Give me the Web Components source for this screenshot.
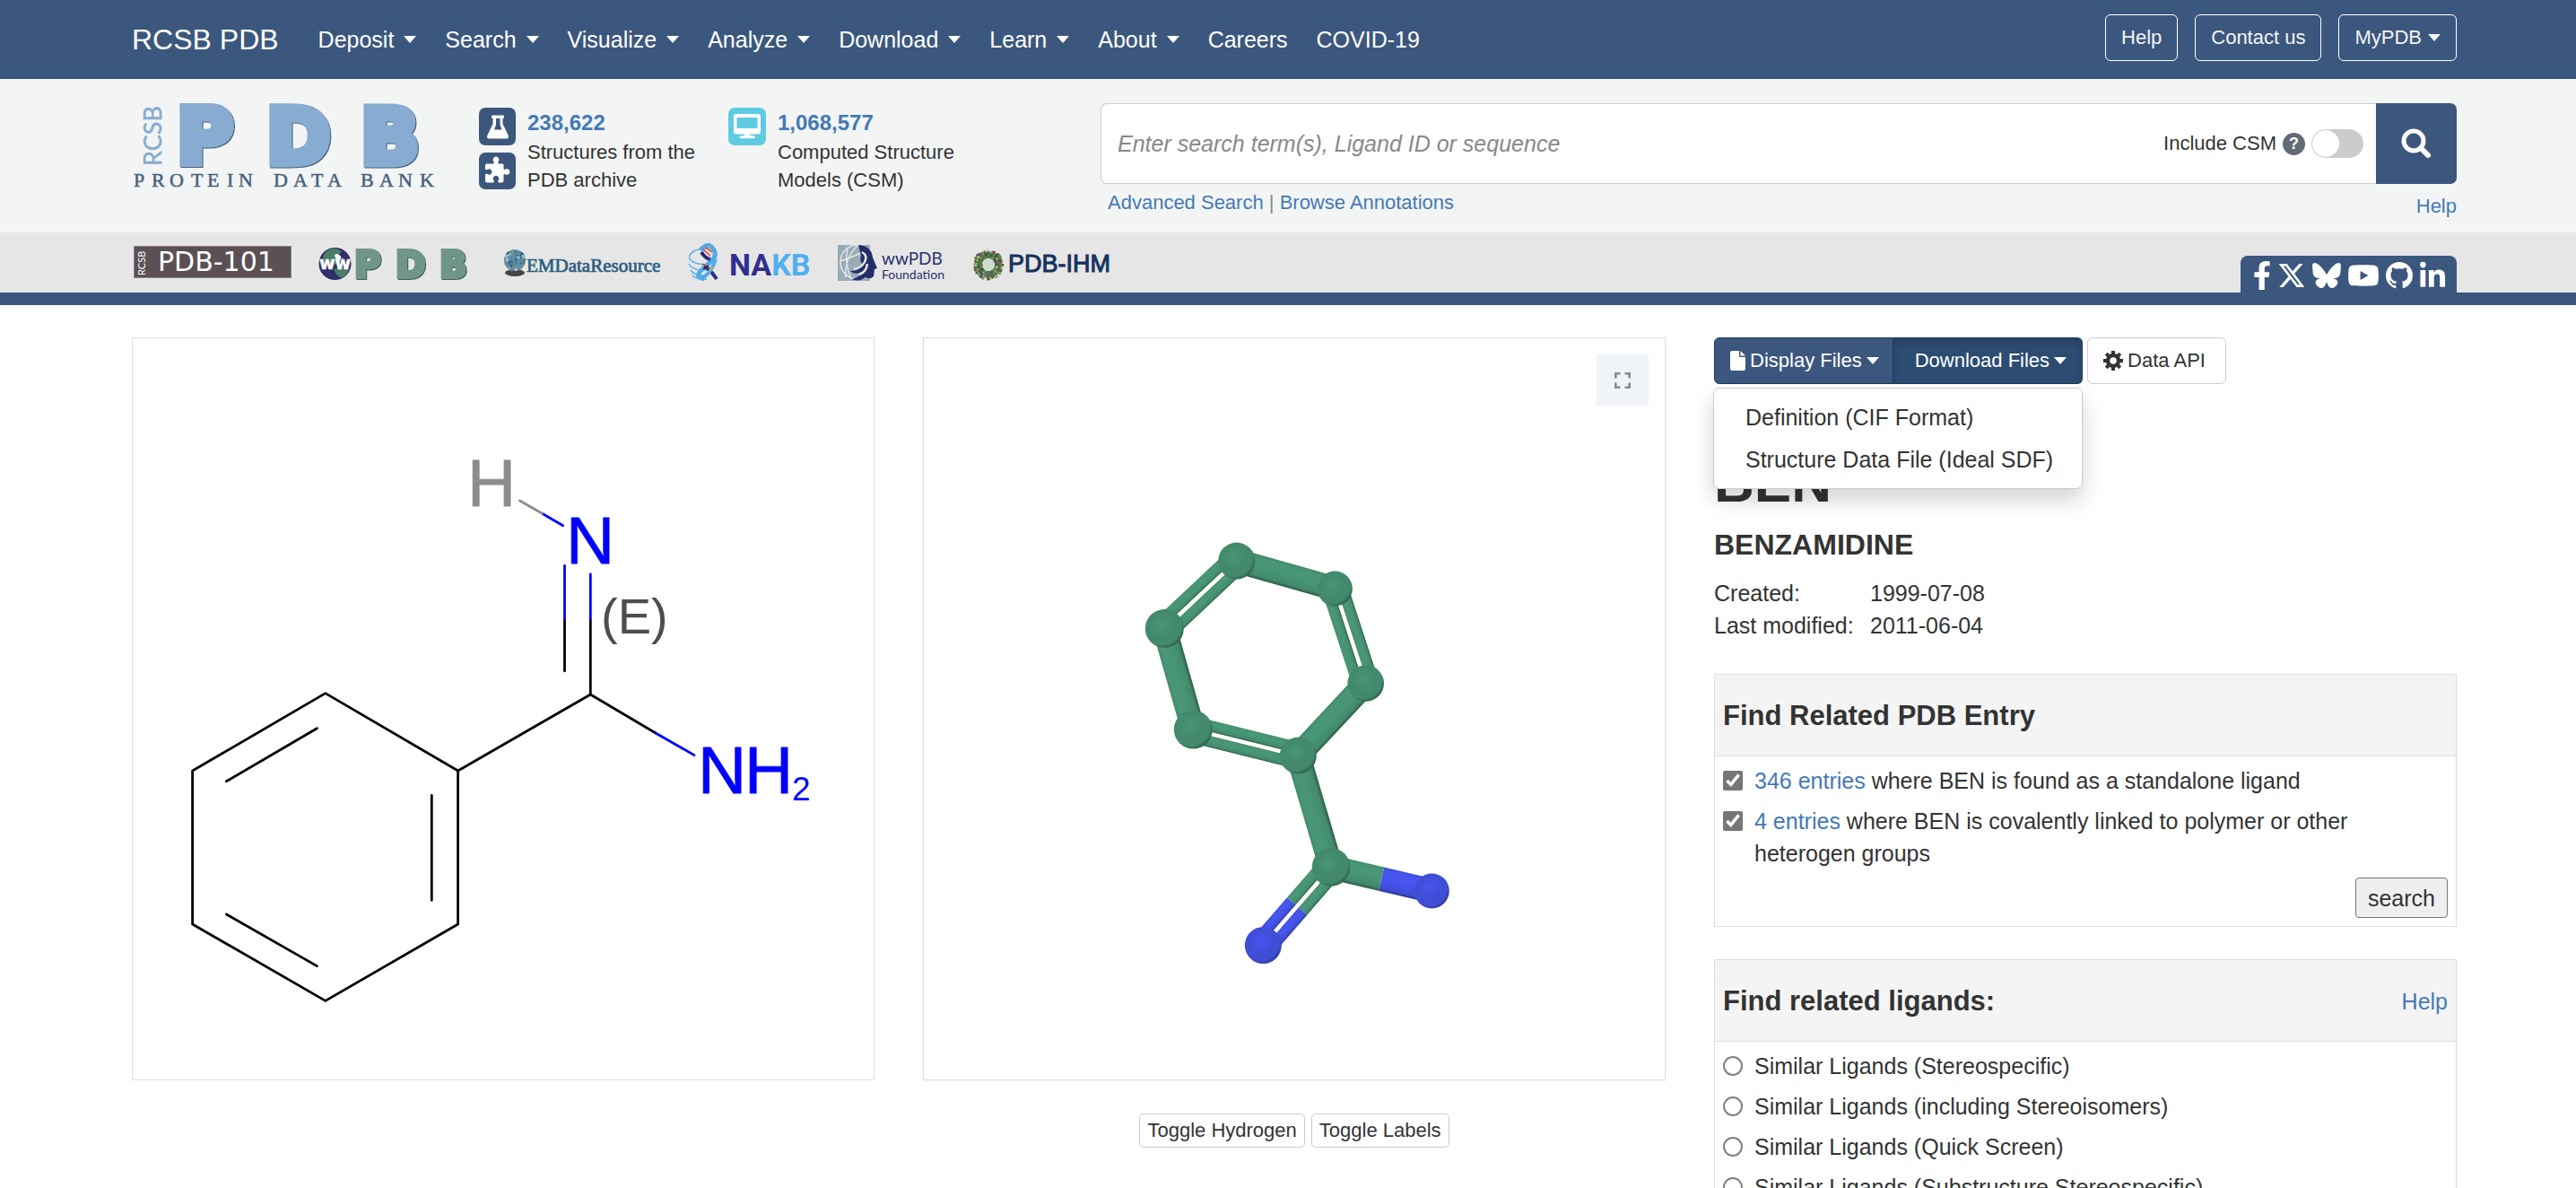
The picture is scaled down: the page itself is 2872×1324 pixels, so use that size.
<!DOCTYPE html>
<html lang="en">
<head>
<meta charset="utf-8">
<title>RCSB PDB - BEN Ligand Summary Page</title>
<style>
  html { scrollbar-width: none; }
  body {
    margin: 0; background: #fff; color: #333;
    font: 25px/36px "Liberation Sans", Arial, sans-serif;
    --navy: #3c577d; --link: #4479b6; --line: #ddd;
    --gutter-left: 147px; --gutter-right: 133px;
  }
</style>
</head>
<body>
<site-nav>
  <nav-item menu>Deposit</nav-item>
  <nav-item menu>Search</nav-item>
  <nav-item menu>Visualize</nav-item>
  <nav-item menu>Analyze</nav-item>
  <nav-item menu>Download</nav-item>
  <nav-item menu>Learn</nav-item>
  <nav-item menu>About</nav-item>
  <nav-item>Careers</nav-item>
  <nav-item>COVID-19</nav-item>
</site-nav>
<site-header></site-header>
<partner-strip></partner-strip>
<ligand-page>
  <diagram-2d slot="one"></diagram-2d>
  <viewer-3d slot="two"></viewer-3d>
  <file-toolbar slot="three"></file-toolbar>
  <ligand-summary slot="three"></ligand-summary>
  <search-panel slot="three" submit>
    <span slot="title">Find Related PDB Entry</span>
    <choice-row type="checkbox" checked><link-text>346 entries</link-text> where BEN is found as a standalone ligand</choice-row>
    <choice-row type="checkbox" checked><link-text>4 entries</link-text> where BEN is covalently linked to polymer or other heterogen groups</choice-row>
  </search-panel>
  <search-panel slot="three" help>
    <span slot="title">Find related ligands:</span>
    <choice-row type="radio">Similar Ligands (Stereospecific)</choice-row>
    <choice-row type="radio">Similar Ligands (including Stereoisomers)</choice-row>
    <choice-row type="radio">Similar Ligands (Quick Screen)</choice-row>
    <choice-row type="radio">Similar Ligands (Substructure Stereospecific)</choice-row>
  </search-panel>
</ligand-page>

<script>
const BASE = `
  *, *::before, *::after { box-sizing: border-box; }
  :host { display: block; }
  :host([hidden]) { display: none; }
  a { color: var(--link); text-decoration: none; }
  button { font: inherit; color: inherit; margin: 0; cursor: pointer; }
  svg { display: block; flex: none; }
  .caret { display: inline-block; flex: none; border: 7px solid transparent; border-top: 8px solid currentColor; border-bottom: 0; }
`;
function define(name, html, setup) {
  customElements.define(name, class extends HTMLElement {
    constructor() {
      super();
      const root = this.attachShadow({ mode: 'open' });
      const t = document.createElement('template');
      t.innerHTML = '<style>' + BASE + '</style>' + (typeof html === 'function' ? html(this) : html);
      root.appendChild(t.content.cloneNode(true));
      if (setup) setup(this, root);
    }
  });
}

/* ---------- top navigation ---------- */
define('nav-item', el => `
  <style>
    :host { font-size: 25px; line-height: 30px; }
    a { color: #fff; display: flex; align-items: center; gap: 11px; }
  </style>
  <a href="#"><slot></slot>${el.hasAttribute('menu') ? '<span class="caret"></span>' : ''}</a>`);

define('site-nav', `
  <style>
    :host { background: var(--navy); color: #fff; }
    .bar { display: flex; align-items: center; height: 88px; padding: 0 var(--gutter-right) 0 var(--gutter-left); }
    .brand { color: #fff; font-size: 32px; line-height: 36px; margin-right: 44px; }
    nav { display: flex; gap: 32px; }
    .actions { display: flex; gap: 19px; margin: 0 0 4px auto; }
    button { display: flex; align-items: center; gap: 7px; height: 52px; padding: 0 17px; font-size: 22px; line-height: 30px;
      color: #f3f5f4; background: none; border: 1px solid #fff; border-radius: 6px; }
  </style>
  <div class="bar">
    <a class="brand" href="#">RCSB PDB</a>
    <nav><slot></slot></nav>
    <div class="actions">
      <button type="button">Help</button>
      <button type="button">Contact us</button>
      <button type="button">MyPDB<span class="caret"></span></button>
    </div>
  </div>`);

/* ---------- header with logo, counts and search ---------- */
define('stat-block', `
  <style>
    :host { display: flex; gap: 13px; }
    .icons { display: flex; flex-direction: column; gap: 8px; }
    b { display: block; font-size: 24px; line-height: 33px; color: var(--link); }
    p { margin: 1px 0 0; font-size: 22px; line-height: 31px; }
  </style>
  <div class="icons"><slot name="icon"></slot></div>
  <div><b><slot name="count"></slot></b><p><slot></slot></p></div>`);

define('pdb-logo', `
  <style>.big { filter: drop-shadow(1px 1px 0 #44607f); }</style>
  <svg width="340" height="96" viewBox="147 115 340 96" role="img" aria-label="RCSB PDB Protein Data Bank">
    <text class="big" x="197 297 402" y="182" font-family="'DejaVu Sans'" font-weight="bold" font-size="86" stroke-width="9" stroke-linejoin="miter" fill="#88abd1" stroke="#88abd1">PDB</text>
    <text transform="translate(180 185) rotate(-90)" font-family="Lato" font-size="27" fill="#88abd1" stroke="#88abd1" stroke-width=".5">RCSB</text>
    <text x="149 169 189 213 231 253 266 305 327 347 365 402 423 444 468" y="208" font-family="'Liberation Serif'" font-size="22" fill="#47617f" stroke="#47617f" stroke-width="0.5">PROTEINDATABANK</text>
  </svg>`);

define('site-header', `
  <style>
    :host { background: #f3f5f4; }
    .grid { display: grid; grid-template-columns: 5fr 7fr; padding: 27px var(--gutter-right) 14px var(--gutter-left); }
    .left { display: flex; align-items: flex-start; }
    pdb-logo { margin-right: 47px; }
    stat-block { margin-top: 5px; width: 278px; }
    form { margin: 0; }
    .box { display: flex; height: 90px; }
    .field { flex: 1; display: flex; align-items: center; gap: 7px; padding: 0 14px 0 18px; background: #fff;
      border: 1px solid #ccc; border-right: 0; border-radius: 7px 0 0 7px; }
    input[type=text] { flex: 1; min-width: 0; height: 60px; border: 0; outline: 0; padding: 0; background: none; font: 25px/30px "Liberation Sans", sans-serif; color: #333; }
    input::placeholder { color: #888; font-style: italic; opacity: 1; }
    label { font-size: 22px; line-height: 30px; }
    .q { width: 25px; height: 25px; border-radius: 50%; background: #626a74; color: #fff; font: bold 18px/25px "Liberation Sans"; text-align: center; }
    .toggle { appearance: none; margin: 0; width: 58px; height: 32px; padding: 1px; border-radius: 16px; background: #ccc; }
    .toggle::before { content: ""; display: block; width: 30px; height: 30px; border-radius: 50%; background: #fff; }
    .go { width: 90px; border: 0; padding: 0; background: var(--navy); border-radius: 0 7px 7px 0; display: grid; place-items: center; }
    .links { display: flex; justify-content: space-between; align-items: flex-start; font-size: 22px; line-height: 31px; padding: 5px 0 0 8px; color: #888; }
    .links .help { margin-top: 4px; }
  </style>
  <div class="grid">
    <div class="left">
      <pdb-logo></pdb-logo>
      <stat-block>
        <svg slot="icon" width="41" height="42" viewBox="0 0 41 42"><rect width="41" height="42" rx="7" fill="#3c577d"/>
          <path d="M15 8.500h12q1 0 1 1v1.500q0 1-1.500 1v6l6 12.500q1.500 4-2 4H11.500q-3.500 0-2-4l6-12.500v-6q-1.500 0-1.500-1V9.500q0-1 1-1z" fill="#fff"/>
          <path d="M19 12h4.500v7l2 5.500h-8.500l2-5.500z" fill="#3c577d"/></svg>
        <svg slot="icon" width="41" height="41" viewBox="0 0 41 41"><rect width="41" height="41" rx="7" fill="#3c577d"/>
          <path d="M8.500 12.500h7.500q1.500-.8.500-2.300a3.300 3.300 0 1 1 5 0q-1 1.500.5 2.300h4q1.500 0 1.500 1.500v4q.8 1.500 2.300.5a3.300 3.300 0 1 1 0 6q-1.500-1-2.300.5v6.500q0 2-2 2h-3.500q-1.500-1-.5-2.500a3.200 3.200 0 1 0-5 0q1 1.500-.5 2.500H9q-2 0-2-2v-7q.8-1.300 2.300-.4a3.200 3.200 0 1 0 0-5.200q-1.500 1-2.300-.4V14q0-1.500 1.500-1.500z" fill="#fff"/></svg>
        <span slot="count">238,622</span>Structures from the<br>PDB archive
      </stat-block>
      <stat-block>
        <svg slot="icon" width="42" height="42" viewBox="0 0 42 42"><rect width="42" height="42" rx="7" fill="#5fcbe3"/>
          <rect x="6" y="7" width="30" height="22.500" rx="3" fill="#fff"/><rect x="9.500" y="11" width="23" height="12" fill="#5fcbe3"/>
          <path d="M18.500 29h5.500l.8 2.200h4q1.200 0 1.200 1.500t-1.200 1.500h-15q-1.200 0-1.200-1.500t1.200-1.500h4z" fill="#fff"/></svg>
        <span slot="count">1,068,577</span>Computed Structure<br>Models (CSM)
      </stat-block>
    </div>
    <form>
      <div class="box">
        <div class="field">
          <input type="text" aria-label="Search" placeholder="Enter search term(s), Ligand ID or sequence">
          <label for="csm">Include CSM</label>
          <span class="q">?</span>
          <input class="toggle" id="csm" type="checkbox">
        </div>
        <button class="go" type="button" aria-label="Search">
          <svg width="34" height="34" viewBox="0 0 34 34" fill="none" stroke="#fff"><circle cx="14" cy="14" r="11" stroke-width="5"/><path d="M22 22l8 8" stroke-width="6" stroke-linecap="round"/></svg>
        </button>
      </div>
      <div class="links"><span><a href="#">Advanced Search</a> | <a href="#">Browse Annotations</a></span><a class="help" href="#">Help</a></div>
    </form>
  </div>`);

/* ---------- partner logos and social tab ---------- */
define('social-links', `
  <style>
    :host { display: flex; align-items: center; gap: 8px; height: 41px; padding: 3px 13px 0 14px; background: var(--navy); border-radius: 8px 8px 0 0; }
    svg { fill: #fff; }
  </style>
  <a href="#" aria-label="Facebook"><svg width="20" height="32" viewBox="0 0 320 512"><path d="M279.140 288l14.220-92.660h-88.910v-60.130c0-25.350 12.420-50.060 52.240-50.060h40.420V6.260S260.430 0 225.360 0c-73.220 0-121.080 44.380-121.080 124.720v70.620H22.890V288h81.390v224h100.170V288z"/></svg></a>
  <a href="#" aria-label="X"><svg width="30" height="32" viewBox="16 0 482 512"><path d="M389.200 48h70.600L305.600 224.200 487 464H345L233.700 318.600 106.500 464H35.800L200.700 275.500 26.800 48H172.400L272.900 180.900 389.200 48zM364.400 421.800h39.100L151.100 88h-42L364.400 421.800z"/></svg></a>
  <a href="#" aria-label="Bluesky"><svg width="32" height="32" viewBox="0 0 512 512"><path d="M111.800 62.200C170.200 105.900 233 194.700 256 242.400c23-47.600 85.800-136.400 144.200-180.200c42.100-31.600 110.300-56 110.300 21.800c0 15.500-8.900 130.500-14.100 149.200C478.200 298 412 314.600 353.100 304.500c102.900 17.500 129.100 75.500 72.500 133.500c-107.400 110.200-154.300-27.600-166.300-62.900c-1.700-4.900-2.600-7.800-3.300-7.800s-1.600 3-3.300 7.800c-12 35.300-59 173.100-166.300 62.900c-56.500-58-30.400-116 72.500-133.500C100 314.600 33.800 298 15.700 233.100C10.400 214.400 1.500 99.400 1.500 83.900c0-77.800 68.200-53.400 110.300-21.800z"/></svg></a>
  <a href="#" aria-label="YouTube"><svg width="34" height="32" viewBox="12 0 552 512"><path d="M549.655 124.083c-6.281-23.650-24.787-42.276-48.284-48.597C458.781 64 288 64 288 64S117.220 64 74.629 75.486c-23.497 6.322-42.003 24.947-48.284 48.597-11.412 42.867-11.412 132.305-11.412 132.305s0 89.438 11.412 132.305c6.281 23.650 24.787 41.500 48.284 47.821C117.220 448 288 448 288 448s170.780 0 213.371-11.486c23.497-6.321 42.003-24.171 48.284-47.821 11.412-42.867 11.412-132.305 11.412-132.305s0-89.438-11.412-132.305zm-317.510 213.508V175.185l142.739 81.205-142.739 81.201z"/></svg></a>
  <a href="#" aria-label="GitHub"><svg width="30" height="30" viewBox="0 0 16 16"><path d="M8 0C3.580 0 0 3.580 0 8c0 3.540 2.290 6.530 5.470 7.590.4.07.55-.17.55-.38 0-.19-.01-.82-.01-1.490-2.010.37-2.530-.49-2.690-.94-.09-.23-.48-.94-.82-1.130-.28-.15-.68-.52-.01-.53.63-.01 1.080.58 1.230.82.72 1.210 1.870.87 2.330.66.07-.52.28-.87.51-1.070-1.780-.2-3.640-.89-3.640-3.950 0-.87.31-1.590.82-2.150-.08-.2-.36-1.020.08-2.120 0 0 .67-.21 2.200.82.64-.18 1.320-.27 2-.27s1.360.09 2 .27c1.530-1.040 2.200-.82 2.200-.82.44 1.100.16 1.920.08 2.120.51.56.82 1.270.82 2.150 0 3.070-1.870 3.750-3.650 3.950.29.25.54.73.54 1.480 0 1.070-.01 1.930-.01 2.200 0 .21.15.46.55.38A8.010 8.010 0 0 0 16 8c0-4.420-3.580-8-8-8z"/></svg></a>
  <a href="#" aria-label="LinkedIn"><svg width="28" height="32" viewBox="0 -10 448 512"><path d="M100.280 448H7.400V148.900h92.880zM53.790 108.100C24.090 108.100 0 83.500 0 53.800a53.790 53.790 0 0 1 107.580 0c0 29.700-24.100 54.300-53.790 54.300zM447.900 448h-92.680V302.400c0-34.700-.7-79.200-48.290-79.200-48.290 0-55.690 37.700-55.690 76.700V448h-92.780V148.900h89.080v40.800h1.300c12.400-23.500 42.690-48.300 87.880-48.300 94 0 111.280 61.900 111.280 142.300V448z"/></svg></a>`);

/* Speckled sphere used by the EMDataResource and PDB-IHM marks. */
function speckles(cx, cy, rIn, rOut, n, colors) {
  let s = '', seed = 7;
  const rnd = () => (seed = (seed * 16807) % 2147483647) / 2147483647;
  for (let i = 0; i < n; i++) {
    const a = rnd() * Math.PI * 2, r = rIn + (rOut - rIn) * Math.sqrt(rnd());
    s += `<circle cx="${(cx + r * Math.cos(a)).toFixed(1)}" cy="${(cy + r * Math.sin(a)).toFixed(1)}" r="${(0.8 + rnd() * 0.8).toFixed(1)}" fill="${colors[i % colors.length]}"/>`;
  }
  return s;
}

define('partner-strip', () => `
  <style>
    :host { background: #e6e6e6; border-bottom: 14px solid var(--navy); }
    .row { display: flex; align-items: center; gap: 30px; height: 67px; padding: 0 var(--gutter-right) 0 149px; }
    .shade { filter: drop-shadow(1px 1px 0 #3f6355); }
    social-links { margin-left: auto; align-self: flex-end; }
  </style>
  <div class="row">
    <a href="#"><svg width="176" height="46" viewBox="149 269 176 46">
      <rect x="149.500" y="273.500" width="175" height="35" fill="#5b5055" stroke="#8d8688"/>
      <text transform="translate(162 306) rotate(-90)" font-family="Lato" font-size="11" fill="#fff">RCSB</text>
      <text x="176" y="301" font-family="'DejaVu Sans'" font-size="30" fill="#fff">PDB-101</text></svg></a>
    <a href="#"><svg width="177" height="46" viewBox="355 269 177 46">
      <circle cx="373.500" cy="293" r="18" fill="#2d2f6b"/>
      <path d="M362 281q6-6 13-5l6 3-4 4 5 3 3 6-8-1-5 4-7-4-5 2q-1-7 2-12zM372 299l9-2 8 2q-2 8-9 10l-5-4z" fill="#4b7d68"/>
      <path d="M373 283q4-3 7 2l-1 5-5-3z" fill="#fff"/>
      <text x="356" y="299" font-family="'DejaVu Sans'" font-weight="bold" font-size="19" fill="#fff" stroke="#fff" stroke-width=".5">ww</text>
      <text class="shade" x="395 441 490" y="308" font-family="'DejaVu Sans'" font-weight="bold" font-size="40" stroke-width="4" stroke-linejoin="miter" fill="#6f9688" stroke="#6f9688">PDB</text></svg></a>
    <a href="#"><svg width="176" height="46" viewBox="562 269 176 46">
      <ellipse cx="574" cy="303" rx="11" ry="4" fill="#444"/>
      <circle cx="574" cy="289" r="12" fill="#5f8fa6"/>${speckles(574, 289, 0, 11.5, 90, ['#2f5f7c', '#a9c4cc', '#7a8a80', '#4f88a8'])}
      <text x="587" y="302" font-family="'Liberation Serif'" font-size="21" fill="#2b6080" stroke="#2b6080" stroke-width=".7">EMDataResource</text></svg></a>
    <a href="#"><svg width="136" height="46" viewBox="768 269 136 46" fill="none">
      <g stroke="#58b2ec" stroke-width="1.600"><path d="M768 286q3-10 20-10M768 286q4 8 22 8M768 293q4 8 20 7M770 300q4 7 18 6M772 306q5 5 16 4"/></g>
      <path d="M781 278q8-10 14-2t-4 16-12 12 6 6" stroke="#4fabe8" stroke-width="5"/>
      <path d="M782 280q4 7 10 8M785 296q6 2 14 14" stroke="#2f2f8f" stroke-width="4"/>
      <path d="M798 288q-4 14-16 22" stroke="#4fabe8" stroke-width="4"/>
      <path d="M784 277l8 7M787 275l7 5M783 293l6 4" stroke="#d8322c" stroke-width="1.500"/><path d="M782 281l6 5M784 299l6-4" stroke="#222" stroke-width="1.500"/><path d="M789 274l3 3M791 300l4-3" stroke="#e5b422" stroke-width="1.500"/>
      <text x="813" y="306" font-family="Roboto" font-weight="bold" font-size="34" fill="#2f2f8f">NA<tspan fill="#4fb0ee">KB</tspan></text></svg></a>
    <a href="#"><svg width="121" height="46" viewBox="934 269 121 46">
      <rect x="934" y="272" width="36" height="40" fill="#9aabb8"/>
      <g fill="none" stroke="#e6e6e6" stroke-width="1.500"><circle cx="956" cy="291" r="19"/><path d="M937 290q18-6 32-14M945 276q-4 16 4 34M957 272q-16 14-14 36"/></g>
      <path d="M957 272q14 0 16 14l5 12-3 1-1 8q-4 4-9 1-8 6-15 2 9-2 11-8-8 4-13-1 10 0 14-7-4-4-2-10z" fill="#232e69"/>
      <path d="M961 280q7 4 3 11t-12 8M967 293q-1 9-9 12" fill="none" stroke="#e6e6e6" stroke-width="2.500"/>
      <g font-family="Lato" fill="#2c2f6e"><text x="983" y="294" font-size="19">wwPDB</text><text x="983" y="310" font-size="14">Foundation</text></g></svg></a>
    <a href="#"><svg width="157" height="46" viewBox="1085 269 157 46">
      <circle cx="1102" cy="294" r="11" fill="none" stroke="#557a49" stroke-width="8"/><circle cx="1102" cy="294" r="7" fill="#c9dccb"/>
      ${speckles(1102, 294, 7, 16.5, 170, ['#3f6b35', '#7a9b5c', '#6a4f86', '#8b5a3a', '#2f4f2f', '#b5c8a0'])}
      <text x="1124" y="302" font-family="'Liberation Sans'" font-size="27" fill="#16325f" stroke="#16325f" stroke-width="1">PDB-IHM</text></svg></a>
    <social-links></social-links>
  </div>`);

/* ---------- page grid ---------- */
define('ligand-page', `
  <style>
    main { display: grid; grid-template-columns: repeat(3, minmax(0, 1fr)); gap: 54px; padding: 36px var(--gutter-right) 36px var(--gutter-left); }
  </style>
  <main>
    <section><slot name="one"></slot></section>
    <section><slot name="two"></slot></section>
    <section><slot name="three"></slot></section>
  </main>`);

define('diagram-2d', `
  <style>
    .frame { aspect-ratio: 1; border: 1px solid var(--line); }
    svg { width: 100%; height: 100%; }
  </style>
  <div class="frame"><svg viewBox="148 377 826 826" fill="none" stroke-width="2.800" stroke-linecap="round" stroke-linejoin="round">
    <g stroke="#000">
      <path d="M362.800 772.600L214.600 859V1030L362.800 1115.400L510.600 1030V859ZM353.400 811.700L252.400 870.700M481.300 886.300V1003.300M252.400 1019L353.400 1076.600"/>
      <path d="M510.600 859L658.300 774V690.500M629.500 747.800V690.500M658.300 774L731 817"/>
    </g>
    <path stroke="#00f" d="M658.300 690.500V640M629.500 690.500V630.300M731 817L774 841.600M604.500 572.200L627.600 585.700"/>
    <path stroke="#8c8c8c" d="M579.500 558L604.500 572.200"/>
    <g font-family="'Liberation Sans'" font-size="75" stroke-width=".8">
      <text x="521" y="564" fill="#8c8c8c" stroke="#8c8c8c">H</text>
      <text x="631" y="628" fill="#00f" stroke="#00f">N</text>
      <text x="670" y="706" font-size="56" fill="#4d4d4d">(E)</text>
      <text x="778 830" y="884" fill="#00f" stroke="#00f">NH</text><text x="883" y="892" font-size="37" fill="#00f">2</text>
    </g>
  </svg></div>`);

/* Ball-and-stick model; each stick is shaded across its width, each ball radially. */
function ballAndStick() {
  const atoms = {
    A: [1378.7, 625.1, 20.5, 'c'], B: [1488.3, 656.1, 19.5, 'c'], C: [1522.7, 761.5, 20.3, 'c'], D: [1447.3, 842.1, 20.5, 'c'],
    E: [1330.3, 813.1, 21.5, 'c'], F: [1298.3, 700.5, 21.5, 'c'], G: [1484, 966.4, 21.3, 'c'], P: [1596.3, 992.9, 19.5, 'n'], Q: [1408.3, 1053.5, 20.5, 'n']
  };
  const bonds = [['A', 'B', 1], ['B', 'C', 2], ['C', 'D', 1], ['D', 'E', 2], ['E', 'F', 1], ['F', 'A', 2], ['D', 'G', 1], ['G', 'P', 1], ['G', 'Q', 2]];
  const tone = { c: ['#489676', '#428a6b', '#2b5a47'], n: ['#4555ee', '#3f4ed6', '#2c368f'] };
  let defs = '', body = '', k = 0;
  const stick = (x1, y1, x2, y2, w, t) => {
    const L = Math.hypot(x2 - x1, y2 - y1);
    let nx = (y2 - y1) / L, ny = -(x2 - x1) / L;
    if (nx * 1 + ny * 1.3 < 0) { nx = -nx; ny = -ny; }
    const h = w / 2, id = 'g' + (k++), [a, b, d] = tone[t];
    defs += `<linearGradient id="${id}" gradientUnits="userSpaceOnUse" x1="${x1 - nx * h}" y1="${y1 - ny * h}" x2="${x1 + nx * h}" y2="${y1 + ny * h}"><stop offset="0" stop-color="${b}"/><stop offset=".15" stop-color="${a}"/><stop offset=".5" stop-color="${a}"/><stop offset=".85" stop-color="${b}"/><stop offset="1" stop-color="${d}"/></linearGradient>`;
    body += `<path fill="url(#${id})" d="M${x1 + nx * h} ${y1 + ny * h}L${x2 + nx * h} ${y2 + ny * h}L${x2 - nx * h} ${y2 - ny * h}L${x1 - nx * h} ${y1 - ny * h}Z"/>`;
  };
  for (const [p, q, order] of bonds) {
    const [x1, y1, , t1] = atoms[p], [x2, y2, , t2] = atoms[q];
    const L = Math.hypot(x2 - x1, y2 - y1), nx = (y2 - y1) / L, ny = -(x2 - x1) / L;
    for (const o of order === 1 ? [0] : [-8.5, 8.5]) {
      const w = order === 1 ? 27 : 12.5, a = [x1 + nx * o, y1 + ny * o], b = [x2 + nx * o, y2 + ny * o];
      if (t1 === t2) stick(...a, ...b, w, t1);
      else {
        const m = [(a[0] + b[0]) / 2, (a[1] + b[1]) / 2];
        stick(...a, ...m, w, t1); stick(...m, ...b, w, t2);
      }
    }
  }
  for (const t of ['c', 'n']) {
    const [a, b, d] = tone[t];
    defs += `<radialGradient id="ball-${t}" cx=".42" cy=".4" r=".64"><stop offset="0" stop-color="${a}"/><stop offset=".55" stop-color="${b}"/><stop offset=".8" stop-color="${b}"/><stop offset="1" stop-color="${d}"/></radialGradient>`;
  }
  for (const [x, y, r, t] of Object.values(atoms)) body += `<circle cx="${x}" cy="${y}" r="${r}" fill="url(#ball-${t})"/>`;
  return `<svg class="model" viewBox="1030 377 826 826"><defs>${defs}</defs>${body}</svg>`;
}

define('viewer-3d', () => `
  <style>
    .frame { position: relative; aspect-ratio: 1; border: 1px solid var(--line); box-shadow: 0 1px 2px rgba(0,0,0,.06); }
    .model { width: 100%; height: 100%; }
    .full { position: absolute; top: 18px; right: 18px; width: 58px; height: 57px; border: 0; padding: 0; background: #f0f4f9; display: grid; place-items: center; }
    .buttons { display: flex; justify-content: center; gap: 7px; margin-top: 37px; }
    .buttons button { height: 38px; padding: 0 8px; font-size: 22px; line-height: 30px; background: #fff; border: 1px solid #ccc; border-radius: 5px; }
  </style>
  <div class="frame">${ballAndStick()}
    <button class="full" type="button" aria-label="Toggle fullscreen"><svg width="18" height="18" viewBox="0 0 18 18" fill="none" stroke="#8a8a8a" stroke-width="2.600"><path d="M1.300 6.500V1.300H6.500M11.500 1.300H16.700V6.500M16.700 11.500V16.700H11.500M6.500 16.700H1.300V11.500"/></svg></button>
  </div>
  <div class="buttons"><button type="button">Toggle Hydrogen</button><button type="button">Toggle Labels</button></div>`);

/* ---------- right column ---------- */
define('file-toolbar', `
  <style>
    :host { position: relative; display: flex; gap: 5px; font-size: 22px; line-height: 30px; }
    .group { display: flex; }
    .btn { display: flex; align-items: center; gap: 5px; height: 52px; padding: 0 15px 0 17px; border: 1px solid #1e3a5c; background: var(--navy); color: #fff; }
    .first { border-radius: 6px 0 0 6px; }
    .open { border-radius: 0 6px 6px 0; border-left: 0; padding-left: 24px; padding-right: 17px; background: #2c4c72; box-shadow: inset 0 5px 9px rgba(0,0,0,.14); }
    .api { background: #fff; color: #333; border-color: #ccc; border-radius: 6px; padding-right: 22px; }
    ul { position: absolute; z-index: 2; top: 56px; left: -1px; margin: 0; padding: 9px 0 8px; width: 412px; list-style: none; background: #fff;
      border: 1px solid #ccc; border-radius: 7px; box-shadow: 0 12px 24px rgba(0,0,0,.18); }
    li a { display: block; padding: 0 35px; font-size: 25px; line-height: 47px; color: #333; white-space: nowrap; }
  </style>
  <div class="group">
    <button class="btn first" type="button"><svg width="17" height="22" viewBox="0 0 17 22" fill="#fff"><path d="M2 0h8v5.500q0 1.500 1.500 1.500H17v13q0 2-2 2H2q-2 0-2-2V2Q0 0 2 0zM11.500 0L17 5.500h-5.500z"/></svg>Display Files<span class="caret"></span></button>
    <button class="btn open" type="button" aria-expanded="true">Download Files<span class="caret"></span></button>
  </div>
  <button class="btn api" type="button"><svg width="22" height="22" viewBox="0 0 22 22"><g fill="none" stroke="#333"><circle cx="11" cy="11" r="6" stroke-width="4.500"/><path stroke-width="4" d="M11 0v4M11 18v4M0 11h4M18 11h4M3.200 3.200l3 3M15.800 15.800l3 3M18.800 3.200l-3 3M6.200 15.800l-3 3"/></g></svg>Data API</button>
  <ul><li><a href="#">Definition (CIF Format)</a></li><li><a href="#">Structure Data File (Ideal SDF)</a></li></ul>`);

define('ligand-summary', `
  <style>
    h1 { margin: 76px 0 17px; font-size: 62px; line-height: 68px; }
    h2 { margin: 0 0 18px; font-size: 32px; line-height: 36px; }
    dl { display: grid; grid-template-columns: 174px 1fr; margin: 0 0 36px; }
    dd { margin: 0; }
  </style>
  <h1>BEN</h1>
  <h2>BENZAMIDINE</h2>
  <dl><dt>Created:</dt><dd>1999-07-08</dd><dt>Last modified:</dt><dd>2011-06-04</dd></dl>`);

define('link-text', `<style>:host { display: inline; }</style><a href="#"><slot></slot></a>`);

define('choice-row', el => `
  <style>
    label { display: flex; align-items: flex-start; gap: 13px; }
    input { flex: none; width: 22px; height: 22px; margin: 7px 0 0; accent-color: #767676; }
    input[type=radio] { appearance: none; border: 2px solid #808080; border-radius: 50%; background: #fff; }
    input[type=radio]:checked { box-shadow: inset 0 0 0 3px #fff; background: #767676; }
  </style>
  <label><input type="${el.getAttribute('type')}" ${el.hasAttribute('checked') ? 'checked' : ''}><span><slot></slot></span></label>`);

define('search-panel', el => `
  <style>
    :host { margin-bottom: 36px; border: 1px solid var(--line); }
    header { display: flex; align-items: center; justify-content: space-between; padding: 29px 9px 27px; background: #f4f4f4; border-bottom: 1px solid var(--line); }
    h3 { margin: 0; font-size: 31px; line-height: 34px; }
    header a { line-height: 34px; }
    form { display: flex; flex-direction: column; gap: 9px; margin: 0; padding: 9px; }
    .submit { align-self: flex-end; height: 45px; padding: 0 13px; line-height: 30px; background: #efefef; border: 1px solid #767676; border-radius: 4px; }
  </style>
  <header><h3><slot name="title"></slot></h3>${el.hasAttribute('help') ? '<a href="#">Help</a>' : ''}</header>
  <form><slot></slot>${el.hasAttribute('submit') ? '<button class="submit" type="button">search</button>' : ''}</form>`);
</script>
</body>
</html>
